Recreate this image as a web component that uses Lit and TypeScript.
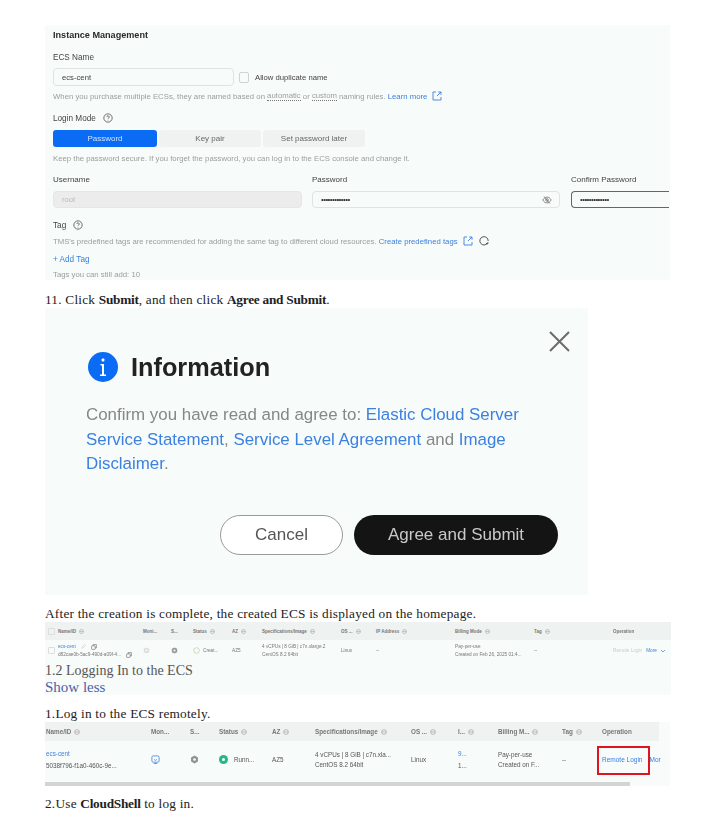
import { LitElement, html, css } from "lit";
import { customElement } from "lit/decorators.js";

const help = (size: number, color = "#555") => html`<svg class="ic" width="${size}" height="${size}" viewBox="0 0 12 12" fill="none" stroke="${color}"><circle cx="6" cy="6" r="5"/><path d="M4.6 4.8a1.4 1.4 0 1 1 2.1 1.2c-.5.3-.7.5-.7 1"/><path d="M6 8.2v.7"/></svg>`;
const external = () => html`<svg class="ic" width="10" height="10" viewBox="0 0 10 10" fill="none" stroke="#3c80e0" stroke-width=".9"><path d="M4 1H1v8h8V6"/><path d="M5 5l4-4M6.2 1H9v2.8"/></svg>`;
const sortIcon = (size: number) => html`<svg class="ic" width="${size}" height="${size}" viewBox="0 0 10 10" fill="none" stroke="#999"><circle cx="5" cy="5" r="4"/><path d="M1.5 5h7"/></svg>`;
const copy = (size: number) => html`<svg class="ic" width="${size}" height="${size}" viewBox="0 0 10 10" fill="none" stroke="#555" stroke-width=".9"><rect x="1" y="3" width="6" height="6" rx="1"/><path d="M3.5 3V1H9v5.5H7"/></svg>`;
const shield = (size: number, color: string) => html`<svg class="ic" width="${size}" height="${size}" viewBox="0 0 12 12"><path d="M6 .8l4.6 2.4v5.6L6 11.2 1.4 8.8V3.2z" fill="${color}"/><circle cx="6" cy="6" r="1.8" fill="#f7fbf9"/></svg>`;

const headA = [["Name/ID", 1], ["Moni...", 0], ["S...", 0], ["Status", 1], ["AZ", 1], ["Specifications/Image", 1], ["OS ...", 1], ["IP Address", 1], ["Billing Mode", 1], ["Tag", 1], ["Operation", 0]] as const;
const headB = [["Name/ID", 1], ["Mon...", 0], ["S...", 0], ["Status", 1], ["AZ", 1], ["Specifications/Image", 1], ["OS ...", 1], ["I...", 1], ["Billing M...", 1], ["Tag", 1], ["Operation", 0]] as const;

@customElement("app-root")
export class AppRoot extends LitElement {
    static styles = css`
        :host {
            display: block;
            background: #fff;
        }
        .page {
            padding: 25px 0 7px 45px;
            width: 625px;
            font-family: "Liberation Serif", serif;
            color: #222;
        }
        .ic { display: block; flex-shrink: 0; }
        .line {
            height: 17px;
            padding-top: 1px;
            line-height: 18px;
            font-size: 13.3px;
            letter-spacing: .22px;
            white-space: nowrap;
        }
        .line b { font-weight: 700; letter-spacing: -.25px; }
        .shot {
            background: #f7fbf9;
            font-family: "Liberation Sans", sans-serif;
            overflow: hidden;
        }

        /* instance management */
        .mgmt {
            width: 625px;
            height: 255px;
            box-sizing: border-box;
            padding: 4px 0 0 8px;
            font-size: 7.7px;
            color: #444;
            filter: blur(.4px);
        }
        .row {
            display: flex;
            align-items: center;
            height: 12px;
            white-space: nowrap;
        }
        .title { font-size: 9.1px; font-weight: 700; color: #2a2a2a; height: 11px; }
        .lbl { font-size: 8.2px; gap: 7px; }
        .hint { color: #9a9e9d; font-size: 7.75px; }
        .hint a, .blue { color: #3c80e0; }
        .hint .ic { margin-left: 5px; }
        .dotted { border-bottom: 1px dotted #777; }
        .inp {
            box-sizing: border-box;
            height: 100%;
            border: 1px solid #dfe3e2;
            border-radius: 4px;
            display: flex;
            align-items: center;
            padding-left: 8px;
        }
        .name-row { display: flex; height: 18px; margin-top: 5px; align-items: center; }
        .check {
            box-sizing: border-box;
            width: 10px;
            height: 11px;
            border: 1px solid #cfd3d2;
            border-radius: 2px;
            margin: 0 6px 0 5px;
        }
        .seg { display: flex; gap: 2px; height: 17px; margin-top: 6px; font-size: 8px; }
        .seg div {
            width: 102px;
            background: #f0f2f1;
            border-radius: 3px;
            display: flex;
            align-items: center;
            justify-content: center;
            color: #666;
        }
        .seg .on { width: 104px; background: #0a6cf5; color: #cfe2ff; }
        .cols { display: grid; grid-template-columns: 249px 248px 99px; column-gap: 10px; }
        .cols > :nth-child(3) { margin-left: 1px; }
        .cols .row { font-size: 8px; }
        .fields { height: 17px; margin-top: 6px; }
        .off { background: #ececec; color: #bbb; border-color: #e6e6e6; }
        .dark { border: 1.5px solid #666; border-right: 0; border-radius: 4px 0 0 4px; }
        .dots { font-size: 8px; letter-spacing: -.6px; color: #333; }
        .pwd { justify-content: space-between; padding-right: 7px; }

        /* dialog */
        .dialog {
            width: 543px;
            height: 287px;
            box-sizing: border-box;
            padding: 23px 30px 0 41px;
            filter: blur(.5px);
        }
        .close { display: flex; justify-content: flex-end; height: 21px; margin-right: -12px; }
        .dlg-head { display: flex; align-items: center; gap: 13px; margin-left: 2px; height: 30px; }
        .dlg-head span { font-size: 25.3px; font-weight: 700; color: #222; }
        .dlg-body {
            margin: 21px 0 0;
            font-size: 16.9px;
            line-height: 24.5px;
            color: #858887;
            height: 73px;
        }
        .dlg-body div { white-space: nowrap; }
        .dlg-body a { color: #3c80e0; }
        .btns { display: flex; justify-content: flex-end; gap: 11px; margin-top: 39px; }
        .btn {
            height: 40px;
            box-sizing: border-box;
            border-radius: 20px;
            display: flex;
            align-items: center;
            justify-content: center;
            font-size: 17px;
        }
        .cancel { width: 123px; border: 1.5px solid #999; color: #555; background: #fff; }
        .agree { width: 204px; background: #141414; color: #c9c9c9; }

        /* tables */
        .tbl-head, .tbl-row { display: grid; align-items: center; white-space: nowrap; }
        .tbl-head { background: #eef2f0; color: #777; font-weight: 700; }
        .hcell { display: flex; align-items: center; gap: 3px; }
        .small { height: 73px; width: 626px; }
        .small .inner { filter: blur(.45px); font-size: 4.7px; color: #777; }
        .small .tbl-head, .small .tbl-row {
            grid-template-columns: 10px 85px 28px 22px 39px 30px 79px 35px 79px 79px 79px 58px;
        }
        .small .tbl-head { height: 18px; font-size: 4.5px; padding-left: 3px; }
        .small .tbl-row { height: 21px; padding-left: 3px; line-height: 8px; }
        .small .box { width: 7px; height: 7px; border: 1px solid #ddd; border-radius: 1px; box-sizing: border-box; }
        .small-name { display: flex; align-items: center; gap: 5px; }
        .overlay {
            font-family: "Liberation Serif", serif;
            font-size: 14px;
            line-height: 16px;
            padding-top: 2px;
            color: #555;
            background: #f7fbf9;
        }
        .overlay a { display: block; font-size: 15px; color: #4a62a8; }
        .remote { color: #ccc; }
        .more { color: #3c80e0; margin-left: 1px; }
        .big { height: 64px; width: 625px; font-size: 6.3px; color: #555; filter: blur(.4px); }
        .big .tbl-head, .big .tbl-row {
            grid-template-columns: 105px 39px 29px 53px 43px 96px 47px 40px 64px 40px 56px;
        }
        .big .tbl-head { height: 19px; width: 613px; padding-left: 1px; font-size: 6.3px; }
        .big .tbl-row { height: 37px; padding-left: 1px; line-height: 9.5px; }
        .op { position: relative; display: flex; gap: 7px; overflow: visible; }
        .op .blue { font-size: 6.5px; }
        .red {
            position: absolute;
            left: -5px;
            top: -9px;
            width: 53px;
            height: 29px;
            border: 2px solid #e0141c;
            box-sizing: border-box;
        }
        .track { height: 4px; width: 585px; background: #d3d4d4; margin-top: 4px; }
        .running { display: flex; align-items: center; gap: 6px; }
        .ok { width: 9px; height: 9px; border-radius: 50%; background: #27b58a; display: flex; align-items: center; justify-content: center; }
        .ok i { width: 3px; height: 3px; background: #fff; border-radius: 50%; }
    `;

    renderMgmt() {
        return html`
            <div class="shot mgmt">
                <div class="row title">Instance Management</div>
                <div class="row lbl" style="margin-top:11px">ECS Name</div>
                <div class="name-row">
                    <div class="inp" style="width:181px">ecs-cent</div>
                    <div class="check"></div>
                    <span>Allow duplicate name</span>
                </div>
                <div class="row hint" style="margin-top:4px">
                    When you purchase multiple ECSs, they are named based on&nbsp;<span class="dotted">automatic</span>&nbsp;or&nbsp;<span class="dotted">custom</span>&nbsp;naming rules.&nbsp;<a>Learn more</a>${external()}
                </div>
                <div class="row lbl" style="margin-top:10px">Login Mode ${help(10)}</div>
                <div class="seg">
                    <div class="on">Password</div>
                    <div>Key pair</div>
                    <div>Set password later</div>
                </div>
                <div class="row hint" style="margin-top:5px">Keep the password secure. If you forget the password, you can log in to the ECS console and change it.</div>
                <div class="cols" style="margin-top:9px">
                    <div class="row">Username</div>
                    <div class="row">Password</div>
                    <div class="row">Confirm Password</div>
                </div>
                <div class="cols fields">
                    <div class="inp off">root</div>
                    <div class="inp pwd">
                        <span class="dots">•••••••••••••</span>
                        <svg class="ic" width="10" height="10" viewBox="0 0 12 12" fill="none" stroke="#777"><path d="M1 6c1.4-2.5 3-3.5 5-3.5s3.6 1 5 3.5c-1.4 2.5-3 3.5-5 3.5S2.4 8.5 1 6z"/><circle cx="6" cy="6" r="1.6"/><path d="M2.5 1.8l7 8.4"/></svg>
                    </div>
                    <div class="inp dark"><span class="dots">•••••••••••••</span></div>
                </div>
                <div class="row lbl" style="margin-top:11px">Tag ${help(10)}</div>
                <div class="row hint" style="margin-top:4px">
                    TMS's predefined tags are recommended for adding the same tag to different cloud resources.&nbsp;<a>Create predefined tags</a>${external()}
                    <svg class="ic" style="margin-left:6px" width="10" height="10" viewBox="0 0 12 12" fill="none" stroke="#333"><path d="M10.2 8.5A5 5 0 1 1 11 6"/><path d="M8.5 9l2 .5.3-2"/></svg>
                </div>
                <div class="row blue" style="margin-top:6px;font-size:8.2px">+ Add Tag</div>
                <div class="row hint" style="margin-top:3px">Tags you can still add: 10</div>
            </div>
        `;
    }

    renderDialog() {
        return html`
            <div class="shot dialog">
                <div class="close">
                    <svg class="ic" width="21" height="21" viewBox="0 0 21 21" stroke="#6b6b6b" stroke-width="2"><path d="M1 1l19 19M20 1L1 20"/></svg>
                </div>
                <div class="dlg-head">
                    <svg class="ic" width="30" height="30" viewBox="0 0 30 30">
                        <circle cx="15" cy="15" r="15" fill="#0a6cf5"/>
                        <rect x="13.6" y="6.5" width="2.8" height="3" rx="1" fill="#fff"/>
                        <path d="M12.5 12h3.5v10.5h2V24h-6v-1.5h2v-9h-1.5z" fill="#fff"/>
                    </svg>
                    <span>Information</span>
                </div>
                <div class="dlg-body">
                    <div>Confirm you have read and agree to: <a>Elastic Cloud Server</a></div>
                    <div><a>Service Statement</a>, <a>Service Level Agreement</a> and <a>Image</a></div>
                    <div><a>Disclaimer</a>.</div>
                </div>
                <div class="btns">
                    <div class="btn cancel">Cancel</div>
                    <div class="btn agree">Agree and Submit</div>
                </div>
            </div>
        `;
    }

    renderSmallTable() {
        return html`
            <div class="shot small">
                <div class="inner">
                    <div class="tbl-head">
                        <div class="box"></div>
                        ${headA.map(([t, s]) => html`<div class="hcell">${t}${s ? sortIcon(5) : ""}</div>`)}
                    </div>
                    <div class="tbl-row">
                        <div class="box"></div>
                        <div>
                            <div class="small-name"><span class="blue">ecs-cent</span>
                                <svg class="ic" width="5" height="5" viewBox="0 0 6 6" fill="none" stroke="#ccc" stroke-width=".7"><path d="M1 5l.3-1.3L4.5.7l1 1-3.2 3.1z"/></svg>
                                ${copy(6)}</div>
                            <div class="small-name">d82cae0b-5ac9-490d-a09f-4...${copy(6)}</div>
                        </div>
                        <div>${shield(7, "#ddd")}</div>
                        <div>${shield(7, "#999")}</div>
                        <div class="hcell"><svg class="ic" width="7" height="7" viewBox="0 0 10 10" fill="none" stroke="#b9cf9f"><circle cx="5" cy="5" r="4"/></svg> Creat...</div>
                        <div>AZ5</div>
                        <div>4 vCPUs | 8 GiB | c7n.xlarge.2<br />CentOS 8.2 64bit</div>
                        <div>Linux</div>
                        <div>--</div>
                        <div>Pay-per-use<br />Created on Feb 26, 2025 01:4...</div>
                        <div>--</div>
                        <div class="hcell"><span class="remote">Remote Login</span><span class="more">More</span>
                            <svg class="ic" width="6" height="6" viewBox="0 0 6 6" fill="none" stroke="#3c80e0" stroke-width=".7"><path d="M1 2l2 2 2-2"/></svg>
                        </div>
                    </div>
                </div>
                <div class="overlay">1.2 Logging In to the ECS<a>Show less</a></div>
            </div>
        `;
    }

    renderBigTable() {
        return html`
            <div class="shot big">
                <div class="tbl-head">
                    ${headB.map(([t, s]) => html`<div class="hcell">${t}${s ? sortIcon(6) : ""}</div>`)}
                </div>
                <div class="tbl-row">
                    <div><div class="blue">ecs-cent</div><div style="margin-top:3px">5038f796-f1a0-460c-9e...</div></div>
                    <div>
                        <svg class="ic" width="9" height="9" viewBox="0 0 10 10" fill="none" stroke="#4a8fe8"><rect x="1" y="1" width="8" height="7" rx="1.5"/><path d="M3.5 5l1.5 1 1.5-1M3 9.5h4"/></svg>
                    </div>
                    <div>${shield(9, "#8e9494")}</div>
                    <div class="running"><div class="ok"><i></i></div>Runn...</div>
                    <div>AZ5</div>
                    <div>4 vCPUs | 8 GiB | c7n.xla...<br />CentOS 8.2 64bit</div>
                    <div>Linux</div>
                    <div><div class="blue">9...</div><div style="margin-top:3px">1...</div></div>
                    <div>Pay-per-use<br />Created on F...</div>
                    <div>--</div>
                    <div class="op">
                        <span class="blue">Remote Login</span><span class="blue">Mor</span>
                        <div class="red"></div>
                    </div>
                </div>
                <div class="track"></div>
            </div>
        `;
    }

    render() {
        return html`
            <div class="page">
                ${this.renderMgmt()}
                <div class="line" style="margin-top:10px">11. Click <b>Submit</b>, and then click <b>Agree and Submit</b>.</div>
                ${this.renderDialog()}
                <div class="line" style="margin-top:9px">After the creation is complete, the created ECS is displayed on the homepage.</div>
                ${this.renderSmallTable()}
                <div class="line" style="margin-top:9px">1.Log in to the ECS remotely.</div>
                ${this.renderBigTable()}
                <div class="line" style="margin-top:8px">2.Use <b>CloudShell</b> to log in.</div>
            </div>
        `;
    }
}
